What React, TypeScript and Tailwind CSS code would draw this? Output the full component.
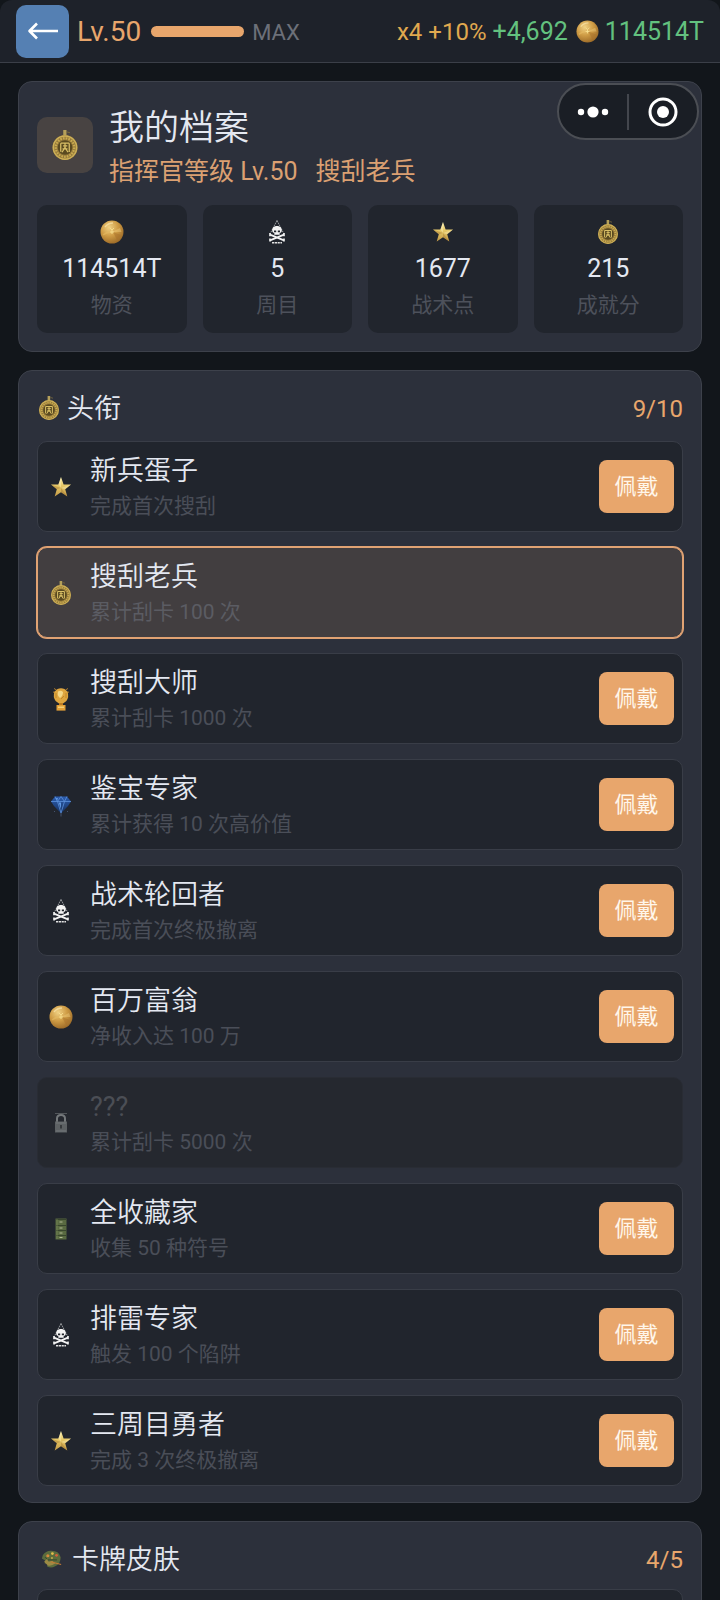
import clsx from "clsx";
import React from "react";

type IconName =
  | "coin"
  | "skull"
  | "star"
  | "medal"
  | "trophy"
  | "gem"
  | "lock"
  | "cabinet"
  | "palette";

const STATS: {icon: IconName; value: string; label: string}[] = [
  {icon: "coin", value: "114514T", label: "物资"},
  {icon: "skull", value: "5", label: "周目"},
  {icon: "star", value: "1677", label: "战术点"},
  {icon: "medal", value: "215", label: "成就分"},
];

type Title = {
  icon: IconName;
  name: string;
  desc: string;
  state?: "equipped" | "locked";
};

const TITLES: Title[] = [
  {icon: "star", name: "新兵蛋子", desc: "完成首次搜刮"},
  {icon: "medal", name: "搜刮老兵", desc: "累计刮卡 100 次", state: "equipped"},
  {icon: "trophy", name: "搜刮大师", desc: "累计刮卡 1000 次"},
  {icon: "gem", name: "鉴宝专家", desc: "累计获得 10 次高价值"},
  {icon: "skull", name: "战术轮回者", desc: "完成首次终极撤离"},
  {icon: "coin", name: "百万富翁", desc: "净收入达 100 万"},
  {icon: "lock", name: "???", desc: "累计刮卡 5000 次", state: "locked"},
  {icon: "cabinet", name: "全收藏家", desc: "收集 50 种符号"},
  {icon: "skull", name: "排雷专家", desc: "触发 100 个陷阱"},
  {icon: "star", name: "三周目勇者", desc: "完成 3 次终极撤离"},
];

// gradients shared by every icon on the page
function IconDefs() {
  return (
    <svg aria-hidden="true" className="absolute h-0 w-0">
      <defs>
        <radialGradient cx="0.38" cy="0.3" id="coinFill" r="0.75">
          <stop offset="0" stopColor="#f0d184" />
          <stop offset="0.5" stopColor="#cf9c45" />
          <stop offset="1" stopColor="#9a6826" />
        </radialGradient>
        <linearGradient id="starFill" x1="0" x2="0" y1="0" y2="1">
          <stop offset="0" stopColor="#fbf0b0" />
          <stop offset="0.45" stopColor="#e6c766" />
          <stop offset="1" stopColor="#c39a46" />
        </linearGradient>
        <linearGradient id="gemFill" x1="0" x2="0" y1="0" y2="1">
          <stop offset="0" stopColor="#2c5eb0" />
          <stop offset="1" stopColor="#16305f" />
        </linearGradient>
      </defs>
    </svg>
  );
}

const DRAWINGS: Record<IconName, React.ReactNode> = {
  coin: (
    <>
      <circle cx="12" cy="12" fill="url(#coinFill)" r="11.5" />
      <path d="M3 15 Q8 11 12 12.5" fill="none" opacity="0.6" stroke="#e6bb62" strokeWidth="1.6" />
      <path d="M13 12 L17 20 L21 15 Z" fill="#a86f2a" opacity="0.5" />
      <path d="M12 12 L20 8 L21.5 12 Z" fill="#f0cd7c" opacity="0.45" />
      <path d="M10 8 L12 10 L14 8 M12 10 V14 M10 12 H14" fill="none" stroke="#f8e08f" strokeWidth="0.9" />
      <path d="M5 7 Q8 3 13 3" fill="none" opacity="0.7" stroke="#f9e6ae" strokeWidth="1.4" />
    </>
  ),
  skull: (
    <>
      <path d="M12 0.5 L5 14 M12 0.5 L19 14" stroke="#a2a5a8" strokeDasharray="1.5 0.8" />
      <path
        d="M12 6 C8.6 6 7.2 8.2 7.2 10.4 C7.2 11.9 8.2 12.7 9.3 13 V14.8 H14.7 V13 C15.8 12.7 16.8 11.9 16.8 10.4 C16.8 8.2 15.4 6 12 6 Z"
        fill="#f4f4f4"
      />
      <path d="M9 10.4 H11.2 V12.2 H9 Z M12.8 10.4 H15 V12.2 H12.8 Z" fill="#22262c" />
      <path d="M5 14.6 L19 20.4 M19 14.6 L5 20.4" stroke="#f4f4f4" strokeWidth="1.8" />
      <path
        d="M5 13 V16.2 M19 13 V16.2 M5 18.6 V21.6 M19 18.6 V21.6"
        stroke="#f4f4f4"
        strokeWidth="1.6"
      />
      <path d="M7 22.8 H17" stroke="#e2e2e2" strokeDasharray="2.2 0.6" strokeWidth="1.6" />
    </>
  ),
  star: (
    <>
      <path
        d="M12 2 L14.6 9.4 L22 9.6 L16.2 14.2 L18.3 21.4 L12 17.2 L5.7 21.4 L7.8 14.2 L2 9.6 L9.4 9.4 Z"
        fill="url(#starFill)"
      />
      <path d="M12 2 L12 13 L9.4 9.4 Z M22 9.6 L12 13 L16.2 14.2 Z" fill="#fff5c4" opacity="0.4" />
      <path d="M18.3 21.4 L12 13 V17.2 Z M2 9.6 L12 13 L7.8 14.2 Z" fill="#94692a" opacity="0.35" />
    </>
  ),
  medal: (
    <>
      <path d="M10.6 0 H13.2 V4.5 H10.6 Z" fill="#b5a05a" />
      <path d="M13.5 1.5 L16 2.2" stroke="#7a6a3c" strokeWidth="0.8" />
      <circle cx="12" cy="14" fill="#95793a" r="10" />
      <circle cx="12" cy="14" fill="none" r="9.3" stroke="#cdb058" strokeWidth="1.2" />
      <circle
        cx="12"
        cy="14"
        fill="none"
        r="7.4"
        stroke="#c9ab50"
        strokeDasharray="1.3 0.9"
        strokeWidth="1.8"
      />
      <circle cx="12" cy="14" fill="#5a4a20" r="5.8" />
      <path
        d="M8.6 10.5 H15.4 M8.6 10.5 V17.4 M15.4 10.5 V17.5 M10.5 12.6 H13.8 M12 11 V14 M12 14 L9.6 17.8 M12 14 L14.4 17.8 M10 15 H14"
        fill="none"
        stroke="#d9bf66"
      />
    </>
  ),
  trophy: (
    <>
      <path d="M5 1.5 L7.5 3 M19 1.5 L16.5 3 M4 5 L6 5.5 M20 5 L18 5.5" stroke="#a9792f" />
      <path
        d="M8.5 2 Q12 0.5 15.5 2 L18.4 4.6 Q20.4 10 17.4 14 L14 16.5 H10 L6.6 14 Q3.6 10 5.6 4.6 Z"
        fill="#dfa63f"
      />
      <path d="M9 4.5 Q12 3 14 5 Q14 9 11 11 Q8 9 9 4.5 Z" fill="#f5d887" />
      <path d="M7 6 V11 M17 6 V11 M12 12 L15 9" stroke="#c28828" />
      <path d="M10 16 H14 V18 H10 Z" fill="#bd7c22" />
      <path d="M7.5 18 H16.5 V23.6 H7.5 Z" fill="#e3a036" />
      <path d="M9 19.5 H15 V21 H9 Z" fill="#f6d176" />
    </>
  ),
  gem: (
    <>
      <path d="M6 3.5 H18 L22 8.5 L19 13 L12 20.5 L5 13 L2 8.5 Z" fill="url(#gemFill)" />
      <path
        d="M2 8.5 H22 M6 3.5 L8.5 8.5 L12 20 L15.5 8.5 L18 3.5 M8.5 8.5 L12 3.5 L15.5 8.5"
        fill="none"
        stroke="#5d92dc"
        strokeWidth="0.8"
      />
      <path d="M9.6 9.4 H12 L12 16 Z M6.5 5 L9 5 L8 8 Z" fill="#5e97e3" />
      <path d="M12 20 V23.5 M5 18 L6 19 M19 18 L18 19" stroke="#45536c" />
    </>
  ),
  lock: (
    <>
      <path d="M6 2.5 H18" stroke="#53575b" />
      <path d="M8 11 V7.5 Q8 4 12 4 Q16 4 16 7.5 V11" fill="none" stroke="#74787b" strokeWidth="2" />
      <path d="M6 10.5 H18 V21.5 H6 Z" fill="#5d6164" />
      <path d="M7 12 H17 M7 20 H17" stroke="#7a7e80" strokeWidth="0.8" />
      <path d="M12 14 V17.5" stroke="#2d3034" strokeWidth="1.6" />
    </>
  ),
  cabinet: (
    <>
      <path d="M6.5 1.5 H17.5 V22.5 H6.5 Z" fill="#596a41" />
      <path d="M7 2.5 H17 M7 8.5 H17 M7 13.5 H17 M7 18.5 H17" stroke="#35422b" strokeWidth="0.9" />
      <path d="M10.5 5 H13.5 M10.5 11 H13.5 M10.5 16 H13.5 M10.5 20.5 H13.5" stroke="#b3b996" />
      <path d="M8 2 V22" stroke="#76865a" strokeWidth="0.7" />
    </>
  ),
  palette: (
    <>
      <path
        d="M2.5 8 Q6 2.5 12 3 Q20 3 22 10 Q22 17 16 20 Q12 22.5 7.5 20.5 L7 17.5 L4.5 16.5 L5 13.5 L1.5 11.5 Z"
        fill="#5b6c3d"
      />
      <path d="M4 15 L7 12 L9 15 L13 14 L16 17 Q12 20 8 19 Z" fill="#9c8a45" />
      <circle cx="8" cy="8.5" fill="#d8893c" r="1.7" />
      <circle cx="13" cy="6" fill="#e3be4c" r="1.5" />
      <circle cx="17.5" cy="8" fill="#d75f3c" r="1.5" />
      <circle cx="12.5" cy="11" fill="#b9a747" r="1.2" />
      <path d="M11 15 L22.5 18" stroke="#c27a35" strokeWidth="1.2" />
      <path d="M8 13 L18 13 M5 10 L7 12" stroke="#33452c" />
    </>
  ),
};

function Icon({name, className = "size-6"}: {name: IconName; className?: string}) {
  return (
    <svg aria-hidden="true" className={clsx("shrink-0", className)} viewBox="0 0 24 24">
      {DRAWINGS[name]}
    </svg>
  );
}

function TopBar() {
  return (
    <header className="flex h-[63px] shrink-0 items-center justify-between rounded-t-xl border-b border-[#3b3f48] bg-[#1e222a] px-4">
      <div className="flex items-center">
        <button
          aria-label="返回"
          className="grid size-[53px] place-content-center rounded-[10px] bg-[#5580b3]"
          type="button"
        >
          <svg
            className="h-5 w-8"
            fill="none"
            stroke="#fff"
            strokeLinejoin="round"
            strokeWidth="2.6"
            viewBox="0 0 32 20"
          >
            <path d="M31 10 H3 M10 2.5 L2.5 10 L10 17.5" />
          </svg>
        </button>
        <span className="ml-2 pt-0.5 text-[28px] text-[#e8a66c]">Lv.50</span>
        <div className="ml-2.5 h-[11px] w-[93px] rounded-full bg-[#e8a66c]" />
        <span className="ml-2 pt-0.5 text-[22px] text-[#6c7079]">MAX</span>
      </div>
      <div className="flex items-center">
        <span className="pt-0.5 text-[24px] text-[#e0a94f]">x4 +10%</span>
        <span className="ml-1.5 pt-0.5 text-[25px] text-[#63c17f]">+4,692</span>
        <Icon className="ml-2 size-[23px]" name="coin" />
        <span className="ml-1.5 pt-0.5 text-[25px] text-[#63c17f]">114514T</span>
      </div>
    </header>
  );
}

function MiniProgramMenu() {
  return (
    <div className="absolute top-[83px] right-[21px] flex h-[57px] w-[142px] items-center rounded-full border-2 border-[#4b4e54] bg-[#1a1e25]">
      <button aria-label="更多" className="grid h-full flex-1 place-content-center" type="button">
        <svg className="h-3 w-8" fill="#fff" viewBox="0 0 32 12">
          <circle cx="4" cy="6" r="3.2" />
          <circle cx="16" cy="6" r="5.6" />
          <circle cx="28" cy="6" r="3.2" />
        </svg>
      </button>
      <div className="h-9 w-0.5 bg-[#43464d]" />
      <button aria-label="关闭" className="grid h-full flex-1 place-content-center" type="button">
        <svg className="size-[30px]" viewBox="0 0 30 30">
          <circle cx="15" cy="15" fill="none" r="13" stroke="#fff" strokeWidth="3" />
          <circle cx="15" cy="15" fill="#fff" r="6" />
        </svg>
      </button>
    </div>
  );
}

function Panel({children}: {children: React.ReactNode}) {
  return (
    <section className="shrink-0 rounded-[14px] border border-[#3d414b] bg-[#2c303b] px-[18px] pt-[18px] pb-4">
      {children}
    </section>
  );
}

function PanelHeader({
  icon,
  iconClass,
  title,
  count,
}: {
  icon: IconName;
  iconClass: string;
  title: string;
  count: string;
}) {
  return (
    <div className="flex h-[38px] items-center">
      <Icon className={iconClass} name={icon} />
      <h2 className="ml-1.5 flex-1 pt-0.5 text-[27px] font-[350]">{title}</h2>
      <span className="pt-0.5 text-[24px] text-[#e8a66c]">{count}</span>
    </div>
  );
}

function Profile() {
  return (
    <Panel>
      <div className="flex items-center gap-4">
        <div className="grid size-14 place-content-center rounded-[10px] bg-[#484342]">
          <Icon className="size-[30px]" name="medal" />
        </div>
        <div className="pt-1">
          <h1 className="text-[35px] leading-[50px] font-[350]">我的档案</h1>
          <p className="flex gap-[18px] text-[25px] leading-9 text-[#dba072]">
            <span>指挥官等级 Lv.50</span>
            <span>搜刮老兵</span>
          </p>
        </div>
      </div>
      <div className="mt-[15px] mb-0.5 grid grid-cols-4 gap-4">
        {STATS.map((stat) => (
          <div key={stat.label} className="flex flex-col items-center rounded-[10px] bg-[#21252d] py-3">
            <div className="grid h-[30px] place-content-center">
              <Icon name={stat.icon} />
            </div>
            <span className="pt-0.5 text-[25px] leading-10">{stat.value}</span>
            <span className="text-[21px] leading-8 text-[#4d515b]">{stat.label}</span>
          </div>
        ))}
      </div>
    </Panel>
  );
}

function TitleRow({title}: {title: Title}) {
  const equipped = title.state === "equipped";
  const locked = title.state === "locked";

  return (
    <li
      className={clsx(
        "flex h-[91px] items-center rounded-[10px] border pr-2 pl-[11px]",
        equipped && "border-[#e0a273] bg-[#423e40] ring-1 ring-[#e0a273]",
        locked && "border-[#292c34] bg-[#25282f]",
        !title.state && "border-[#393d47] bg-[#21252d]",
      )}
    >
      <Icon name={title.icon} />
      <div className="ml-[17px] flex-1 pt-[3px]">
        <h3
          className={clsx("text-[27px] leading-9", locked ? "font-normal text-[#4b4e55]" : "font-[350]")}
        >
          {title.name}
        </h3>
        <p
          className={clsx(
            "text-[21px] leading-[34px]",
            equipped ? "text-[#5b5c63]" : "text-[#4a4e58]",
          )}
        >
          {title.desc}
        </p>
      </div>
      {!title.state && (
        <button
          className="h-[53px] w-[75px] rounded-lg bg-[#e8a66c] text-[22px] text-[#fff6ea]"
          type="button"
        >
          佩戴
        </button>
      )}
    </li>
  );
}

function App() {
  return (
    <div className="relative flex h-screen flex-col overflow-hidden bg-[#12161b] font-['Roboto','Noto_Sans_CJK_SC',sans-serif] text-[#e4e8f1]">
      <IconDefs />
      <TopBar />
      <main className="flex flex-col gap-[18px] p-[18px]">
        <Profile />
        <Panel>
          <PanelHeader count="9/10" icon="medal" iconClass="size-6" title="头衔" />
          <ul className="mt-3.5 flex flex-col gap-[15px]">
            {TITLES.map((title) => (
              <TitleRow key={title.name} title={title} />
            ))}
          </ul>
        </Panel>
        <Panel>
          <PanelHeader count="4/5" icon="palette" iconClass="h-[22px] w-[29px]" title="卡牌皮肤" />
          <div className="mt-[11px] h-[91px] rounded-[10px] border border-[#393d47] bg-[#21252d]" />
        </Panel>
      </main>
      <MiniProgramMenu />
    </div>
  );
}

export default App;
